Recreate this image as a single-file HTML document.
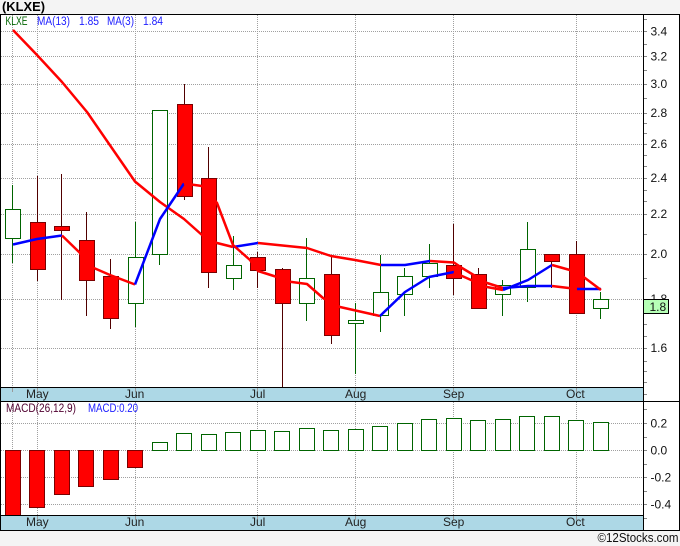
<!DOCTYPE html>
<html><head><meta charset="utf-8"><style>
html,body{margin:0;padding:0;background:#f4f4f4;width:680px;height:546px;overflow:hidden}
svg{display:block}
text{font-family:"Liberation Sans",sans-serif;font-size:12px;fill:#111}
.b{shape-rendering:crispEdges}
.m{fill:#222}
</style></head><body>
<svg width="680" height="546" viewBox="0 0 680 546" xmlns="http://www.w3.org/2000/svg">
<rect width="680" height="546" fill="#f4f4f4"/>
<rect x="0" y="14" width="680" height="517" fill="#fff"/>
<text x="2" y="11" textLength="43" lengthAdjust="spacingAndGlyphs" style="font-size:13px;font-weight:bold;fill:#000">(KLXE)</text>

<g class="b" stroke="#a0a0a0" stroke-width="1" stroke-dasharray="1 1" fill="none">
<path d="M1 31.5H643M1 56.5H643M1 84.5H643M1 113.5H643M1 144.5H643M1 178.5H643M1 214.5H643M1 254.5H643M1 299.5H643M1 348.5H643"/>
<path d="M12.5 15V387M37.5 15V387M135.5 15V387M257.5 15V387M355.5 15V387M453.5 15V387M576.5 15V387"/>
<path d="M1 423.5H643M1 450.5H643M1 477.5H643M1 504.5H643"/>
<path d="M12.5 402V515M37.5 402V515M135.5 402V515M257.5 402V515M355.5 402V515M453.5 402V515M576.5 402V515"/>
</g>

<!-- wicks -->
<g class="b" fill="none" stroke-width="1">
<path stroke="#006400" d="M12.5 185V263M135.5 222V327M159.5 110V265M233.5 236V290M306.5 238V321M355.5 303V374M380.5 255V332M404.5 268V316M429.5 244V288M502.5 280V316M527.5 222V302M600.5 292V319"/>
<path stroke="#500000" d="M37.5 176V281M61.5 174V300M86.5 212V316M110.5 259V329M184.5 84V200M208.5 147V288M257.5 252V288M282.5 268V387M331.5 255V344M453.5 224V295M478.5 268V300M551.5 256V288M576.5 241V300"/>
</g>

<!-- bodies -->
<g class="b" fill="#fff" stroke="#006400" stroke-width="1">
<rect x="5.5" y="209.5" width="15" height="29"/>
<rect x="128.5" y="257.5" width="15" height="46"/>
<rect x="152.5" y="110.5" width="15" height="144"/>
<rect x="226.5" y="265.5" width="15" height="13"/>
<rect x="299.5" y="278.5" width="15" height="25"/>
<rect x="348.5" y="320.5" width="15" height="3"/>
<rect x="373.5" y="292.5" width="15" height="23"/>
<rect x="397.5" y="276.5" width="15" height="18"/>
<rect x="422.5" y="263.5" width="15" height="13"/>
<rect x="495.5" y="285.5" width="15" height="9"/>
<rect x="520.5" y="249.5" width="15" height="38"/>
<rect x="593.5" y="299.5" width="15" height="9"/>
</g>
<g class="b" fill="#ff0000" stroke="#7a0000" stroke-width="1">
<rect x="30.5" y="222.5" width="15" height="47"/>
<rect x="54.5" y="226.5" width="15" height="4"/>
<rect x="79.5" y="240.5" width="15" height="40"/>
<rect x="103.5" y="276.5" width="15" height="42"/>
<rect x="177.5" y="104.5" width="15" height="92"/>
<rect x="201.5" y="178.5" width="15" height="94"/>
<rect x="250.5" y="257.5" width="15" height="13"/>
<rect x="275.5" y="269.5" width="15" height="34"/>
<rect x="324.5" y="274.5" width="15" height="61"/>
<rect x="446.5" y="265.5" width="15" height="13"/>
<rect x="471.5" y="274.5" width="15" height="34"/>
<rect x="544.5" y="254.5" width="15" height="7"/>
<rect x="569.5" y="254.5" width="15" height="59"/>
</g>

<!-- moving averages -->
<g fill="none" stroke-width="2.5" stroke-linejoin="round">
<path stroke="#ff0000" d="M13 30L37 55L62 82L87 112L135 181.5L160 202L184 219L202 235L217 243L233 247"/>
<path stroke="#0000ff" d="M233 247L258 243"/>
<path stroke="#ff0000" d="M258 243L307 248L331 256L355 260L381 265"/>
<path stroke="#0000ff" d="M381 265L405 265L430 261"/>
<path stroke="#ff0000" d="M430 261L454 262.5L462 268L487 283L503 288"/>
<path stroke="#0000ff" d="M503 288L528 286L552 286"/>
<path stroke="#ff0000" d="M552 286L577 289"/>
<path stroke="#0000ff" d="M577 289L601 289"/>
<path stroke="#0000ff" d="M13 244.5L37 239L62 235.5"/>
<path stroke="#ff0000" d="M62 235.5L80 253L87 265L110 275L135 284.5"/>
<path stroke="#0000ff" d="M135 284.5L160 219L184 183.5"/>
<path stroke="#ff0000" d="M184 183.5L202 186L217 203L233 245L250 260L258 271L277 277L290 281.7L307 284L323 298L340 307L380 316"/>
<path stroke="#0000ff" d="M380 316L405 292L429 277L454 272"/>
<path stroke="#ff0000" d="M454 272L462 276L487 287L503 290"/>
<path stroke="#0000ff" d="M503 290L528 280L552 265"/>
<path stroke="#ff0000" d="M552 265L577 272L601 290"/>
</g>

<!-- MACD bars -->
<g class="b" fill="#ff0000" stroke="#7a0000" stroke-width="1">
<rect x="5.5" y="450.5" width="15" height="65"/>
<rect x="29.5" y="450.5" width="15" height="57"/>
<rect x="54.5" y="450.5" width="15" height="44"/>
<rect x="78.5" y="450.5" width="15" height="36"/>
<rect x="103.5" y="450.5" width="15" height="29"/>
<rect x="127.5" y="450.5" width="15" height="17"/>
</g>
<g class="b" fill="#fff" stroke="#006400" stroke-width="1">
<rect x="152.5" y="442.5" width="15" height="8"/>
<rect x="176.5" y="433.5" width="15" height="17"/>
<rect x="201.5" y="434.5" width="15" height="16"/>
<rect x="225.5" y="432.5" width="15" height="18"/>
<rect x="250.5" y="430.5" width="15" height="20"/>
<rect x="274.5" y="431.5" width="15" height="19"/>
<rect x="299.5" y="428.5" width="15" height="22"/>
<rect x="323.5" y="430.5" width="15" height="20"/>
<rect x="348.5" y="429.5" width="15" height="21"/>
<rect x="372.5" y="426.5" width="15" height="24"/>
<rect x="397.5" y="423.5" width="15" height="27"/>
<rect x="421.5" y="419.5" width="15" height="31"/>
<rect x="446.5" y="418.5" width="15" height="32"/>
<rect x="470.5" y="420.5" width="15" height="30"/>
<rect x="495.5" y="419.5" width="15" height="31"/>
<rect x="519.5" y="416.5" width="15" height="34"/>
<rect x="544.5" y="416.5" width="15" height="34"/>
<rect x="568.5" y="420.5" width="15" height="30"/>
<rect x="593.5" y="422.5" width="15" height="28"/>
</g>

<!-- bands -->
<g class="b">
<rect x="1" y="388" width="642" height="13" fill="#add8e6"/>
<rect x="1" y="516" width="642" height="14" fill="#add8e6"/>
<g stroke="#999" stroke-width="1" fill="none">
<path d="M12.5 388V392M37.5 388V392M135.5 388V392M257.5 388V392M355.5 388V392M453.5 388V392M576.5 388V392"/>
<path d="M37.5 516V520M135.5 516V520M257.5 516V520M355.5 516V520M453.5 516V520M576.5 516V520"/>
</g>
<!-- axis ticks -->
<path stroke="#888" stroke-width="1" fill="none" d="M644 19.5H647M644 31.5H647M644 44.5H647M644 56.5H647M644 70.5H647M644 84.5H647M644 98.5H647M644 113.5H647M644 123.5H647M644 133.5H647M644 144.5H647M644 155.5H647M644 166.5H647M644 178.5H647M644 190.5H647M644 201.5H647M644 214.5H647M644 234.5H647M644 254.5H647M644 278.5H647M644 324.5H647M644 336.5H647M644 348.5H647M644 361.5H647M644 371.5H647M644 382.5H647M644 394.5H647M644 409.5H647M644 423.5H647M644 437.5H647M644 450.5H647M644 464.5H647M644 477.5H647M644 491.5H647M644 504.5H647M644 518.5H647"/>
<!-- frame -->
<g stroke="#000" stroke-width="1" fill="none">
<path d="M0 14.5H680M0.5 14V531M679.5 14V531M0 530.5H680"/>
<path d="M643.5 14V531M0 387.5H644M0 401.5H680M0 515.5H644"/>
</g>
</g>

<!-- legend -->
<text x="5.5" y="25" textLength="22" lengthAdjust="spacingAndGlyphs" style="font-size:11.5px;fill:#006400">KLXE</text>
<text x="37" y="25" textLength="33" lengthAdjust="spacingAndGlyphs" style="font-size:11.5px;fill:#2020ff">MA(13)</text>
<text x="79" y="25" textLength="20" lengthAdjust="spacingAndGlyphs" style="font-size:11.5px;fill:#2020ff">1.85</text>
<text x="107" y="25" textLength="27" lengthAdjust="spacingAndGlyphs" style="font-size:11.5px;fill:#2020ff">MA(3)</text>
<text x="143" y="25" textLength="20" lengthAdjust="spacingAndGlyphs" style="font-size:11.5px;fill:#2020ff">1.84</text>
<text x="6" y="412" textLength="70" lengthAdjust="spacingAndGlyphs" style="font-size:11.5px;fill:#500030">MACD(26,12,9)</text>
<text x="88" y="412" textLength="50" lengthAdjust="spacingAndGlyphs" style="font-size:11.5px;fill:#2020ff">MACD:0.20</text>

<!-- y axis labels -->
<text x="650.5" y="35.5">3.4</text>
<text x="650.5" y="60.5">3.2</text>
<text x="650.5" y="88">3.0</text>
<text x="650.5" y="117">2.8</text>
<text x="650.5" y="148">2.6</text>
<text x="650.5" y="182">2.4</text>
<text x="650.5" y="218">2.2</text>
<text x="650.5" y="258">2.0</text>
<text x="650.5" y="303">1.8</text>
<text x="650.5" y="352">1.6</text>
<rect class="b" x="643.5" y="299.5" width="25" height="14" fill="#b6ffb6" stroke="#000"/>
<text x="649.5" y="311">1.8</text>
<text x="650.5" y="427.5">0.2</text>
<text x="650.5" y="454.5">0.0</text>
<text x="650.5" y="481.5">-0.2</text>
<text x="650.5" y="508.5">-0.4</text>

<!-- months -->
<text class="m" x="26" y="398">May</text>
<text class="m" x="125" y="398">Jun</text>
<text class="m" x="250" y="398">Jul</text>
<text class="m" x="345" y="398">Aug</text>
<text class="m" x="443" y="398">Sep</text>
<text class="m" x="566" y="398">Oct</text>
<text class="m" x="26" y="526">May</text>
<text class="m" x="125" y="526">Jun</text>
<text class="m" x="250" y="526">Jul</text>
<text class="m" x="345" y="526">Aug</text>
<text class="m" x="443" y="526">Sep</text>
<text class="m" x="566" y="526">Oct</text>

<text x="597.5" y="542" textLength="81" lengthAdjust="spacingAndGlyphs" style="font-size:13px;fill:#111">©12Stocks.com</text>
</svg>
</body></html>
